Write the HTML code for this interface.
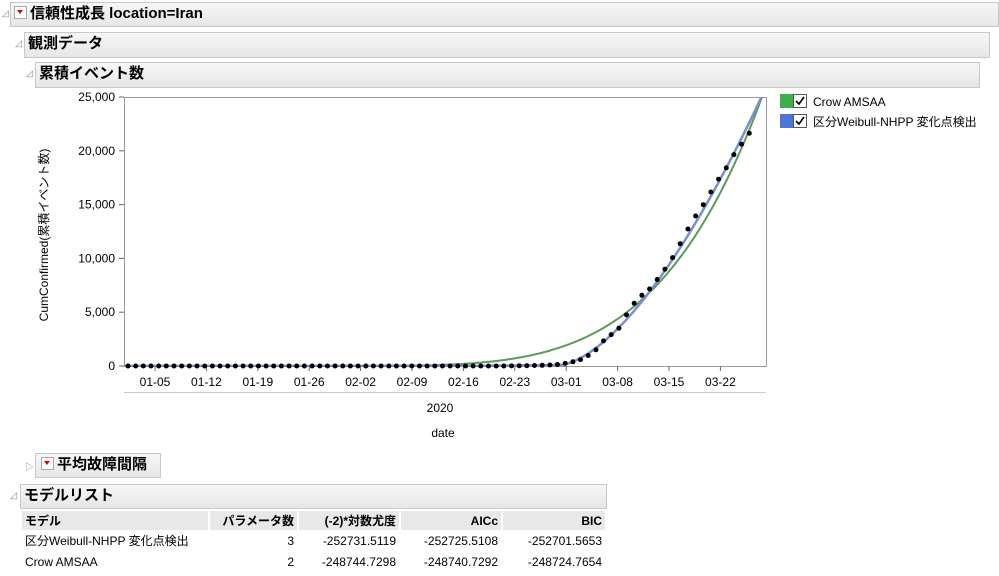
<!DOCTYPE html>
<html><head><meta charset="utf-8"><style>
body{margin:0;width:999px;height:576px;background:#fff;font-family:"Liberation Sans","Noto Sans CJK JP",sans-serif;position:relative;overflow:hidden;color:#000}
.h{position:absolute;background:linear-gradient(#f7f7f7,#e6e6e6);border:1px solid #c8c8c8;font-weight:bold;font-size:15px;box-sizing:border-box;padding-left:3px;line-height:22px}
.tri{position:absolute;font-size:9px;color:#888}
.dd{display:inline-block;width:11px;height:11px;border:1px solid #aaa;background:#fff;vertical-align:-1px;margin-right:3px;position:relative}
.dd:after{content:"";position:absolute;left:2px;top:3px;border-left:3.5px solid transparent;border-right:3.5px solid transparent;border-top:4px solid #d00}
table{position:absolute;left:20px;top:511px;border-collapse:separate;border-spacing:2px 0;font-size:12px}
th{background:#e8e8e8;font-weight:bold;height:19px;padding:0 3px;text-align:right;box-sizing:border-box}
td{height:21px;padding:0 3px;text-align:right}
</style></head><body>
<div class="tri" style="left:2px;top:8px">◿</div>
<div class="h" style="left:10px;top:2px;width:989px;height:25px"><span class="dd"></span>信頼性成長 location=Iran</div>
<div class="tri" style="left:15px;top:38px">◿</div>
<div class="h" style="left:24px;top:32px;width:966px;height:26px">観測データ</div>
<div class="tri" style="left:26px;top:68px">◿</div>
<div class="h" style="left:35px;top:62px;width:945px;height:26px">累積イベント数</div>
<svg style="position:absolute;left:0;top:0" width="999" height="450" id="s">
<defs><clipPath id="c"><rect x="124" y="97" width="643" height="270"/></clipPath></defs>
<rect x="124.5" y="97.5" width="642" height="269" fill="#fff" stroke="#999"/>
<line x1="124" y1="392.5" x2="766" y2="392.5" stroke="#ccc"/>
<text x="48" y="235" transform="rotate(-90 48 235)" font-size="12" text-anchor="middle" font-family="Liberation Sans,Noto Sans CJK JP,sans-serif">CumConfirmed(累積イベント数)</text>
<text x="440" y="412" font-size="12" text-anchor="middle">2020</text>
<text x="443" y="437" font-size="12" text-anchor="middle">date</text>
<rect x="780" y="94" width="13" height="14" fill="#3cae4a"/>
<rect x="780" y="114" width="13" height="14" fill="#4a74d8"/>
<rect x="793.5" y="94.5" width="13" height="13" fill="#fff" stroke="#555"/>
<rect x="793.5" y="114.5" width="13" height="13" fill="#fff" stroke="#555"/>
<path d="M796 101l3 3 5-7M796 121l3 3 5-7" stroke="#000" stroke-width="1.6" fill="none"/>
<text x="813" y="106" font-size="12">Crow AMSAA</text>
<text x="813" y="126" font-size="12" font-family="Liberation Sans,Noto Sans CJK JP,sans-serif">区分Weibull-NHPP 変化点検出</text>
</svg>
<div class="tri" style="left:25px;top:460px">▷</div>
<div class="h" style="left:35px;top:453px;width:126px;height:25px;padding-left:5px"><span class="dd"></span>平均故障間隔</div>
<div class="tri" style="left:10px;top:490px">◿</div>
<div class="h" style="left:20px;top:484px;width:587px;height:25px">モデルリスト</div>
<table>
<tr><th style="text-align:left;width:186px">モデル</th><th style="width:87px">パラメータ数</th><th style="width:100px">(-2)*対数尤度</th><th style="width:100px">AICc</th><th style="width:102px">BIC</th></tr>
<tr><td style="text-align:left">区分Weibull-NHPP 変化点検出</td><td>3</td><td>-252731.5119</td><td>-252725.5108</td><td>-252701.5653</td></tr>
<tr><td style="text-align:left">Crow AMSAA</td><td>2</td><td>-248744.7298</td><td>-248740.7292</td><td>-248724.7654</td></tr>
</table>
<script>
var s=document.getElementById('s'),h='';
function Y(v){return 366-v*269/25000}
[0,5000,10000,15000,20000,25000].forEach(function(v){var y=Y(v);h+='<line x1="119" y1="'+y+'" x2="124" y2="'+y+'" stroke="#666"/><text x="115" y="'+(y+4)+'" font-size="12" text-anchor="end">'+v.toLocaleString('en-US')+'</text>'});
var L=['01-05','01-12','01-19','01-26','02-02','02-09','02-16','02-23','03-01','03-08','03-15','03-22'];
L.forEach(function(t,i){var x=155+i*51.4;h+='<line x1="'+x+'" y1="366" x2="'+x+'" y2="371" stroke="#666"/><text x="'+x+'" y="386" font-size="12" text-anchor="middle">'+t+'</text>'});
var g='',b='';for(var x=124;x<=767;x+=1.5){var v=x<300?0:25000*Math.pow((x-300)/462,4.65);g+=(g?'L':'M')+x+' '+Y(v).toFixed(1);var u=x<560?Math.max(0,(x-480)/80*100):25000*Math.pow((x-560)/202,1.6)+100;b+=(b?'L':'M')+x+' '+Y(u).toFixed(1)}
h+='<g clip-path="url(#c)"><path d="'+g+'" stroke="#5a9a5a" stroke-width="2" fill="none"/><path d="'+b+'" stroke="#7a8ed0" stroke-width="2.5" fill="none"/></g>';
var d=[2,5,18,28,43,61,95,139,245,388,593,978,1501,2336,2922,3513,4747,5823,6566,7161,8042,9000,10075,11364,12729,13938,14991,16169,17361,18407,19644,20610,21638];
var x0=128,dx=7.67;for(var i=0;i<85;i++){var x=x0+i*dx;var v=i<49?0:d[i-49];if(v===undefined)break;h+='<circle cx="'+x.toFixed(1)+'" cy="'+Y(v).toFixed(1)+'" r="2.5" fill="#000"/>'}
s.insertAdjacentHTML('beforeend',h);
</script>
</body></html>
